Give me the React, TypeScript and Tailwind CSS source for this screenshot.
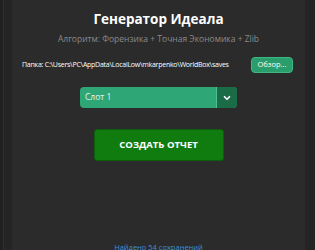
import { ChevronDown } from "lucide-react";

export default function App() {
  return (
    <div className="w-[315px] h-[250px] overflow-hidden bg-[#242424] flex font-['Open_Sans',sans-serif]">
      <div className="w-[4px] h-full bg-[#202020] border-r border-[#2e2e2e]" />
      <div className="ml-[8px] w-[293px] h-[260px] -mt-[4px] rounded-[6px] bg-[#2b2b2b] flex flex-col items-center">
        <h1 className="mt-[14px] text-[13.5px] leading-[18px] font-bold text-white">
          Генератор Идеала
        </h1>
        <p className="mt-[5px] text-[8.5px] leading-[12px] text-[#8a8a8a] whitespace-nowrap">
          Алгоритм: Форензика + Точная Экономика + Zlib
        </p>
        <div className="mt-[12px] w-full flex items-center justify-between pl-[10px] pr-[12px]">
          <span className="text-[7px] leading-[12px] text-white tracking-[-0.25px] whitespace-nowrap">
            Папка: C:\Users\PC\AppData\LocalLow\mkarpenko\WorldBox\saves
          </span>
          <button className="w-[42px] h-[16px] shrink-0 rounded-[4px] bg-[#2a9d6c] border border-[#3fb883] text-[7.5px] text-white flex items-center justify-center">
            Обзор...
          </button>
        </div>
        <div className="mt-[14px] w-[157px] h-[21px] rounded-[4px] bg-[#2ea676] flex overflow-hidden">
          <div className="flex-1 flex items-center pl-[5px] text-[8.5px] text-[#e8f5ee] border-r border-[#4cc08e]">
            Слот 1
          </div>
          <div className="w-[20px] bg-[#1c6b47] flex items-center justify-center">
            <ChevronDown className="w-[10px] h-[10px] text-white" strokeWidth={4} />
          </div>
        </div>
        <button className="mt-[21px] w-[130px] h-[32px] rounded-[3px] bg-[#107c10] border border-[#0c5e0c] text-[9.5px] font-bold text-white">
          СОЗДАТЬ ОТЧЕТ
        </button>
        <p className="mt-[80px] text-[7.5px] leading-[12px] text-[#3a8fd8] whitespace-nowrap">
          Найдено 54 сохранений
        </p>
      </div>
    </div>
  );
}
